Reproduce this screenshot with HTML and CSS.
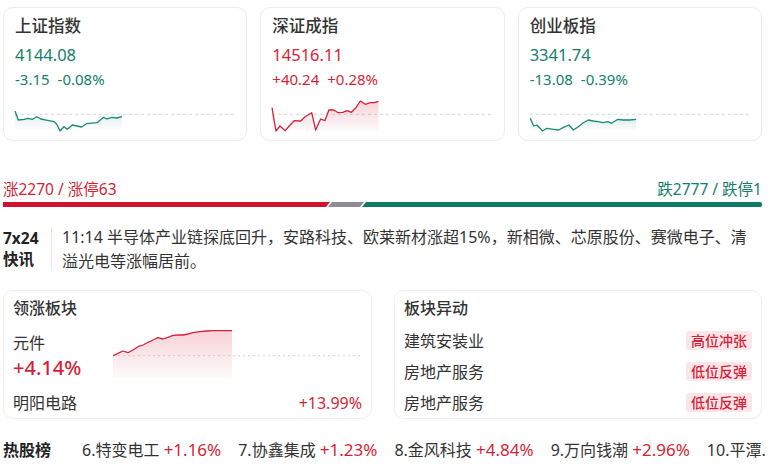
FILE: index.html
```html
<!DOCTYPE html>
<html lang="zh-CN">
<head>
<meta charset="utf-8">
<link rel="stylesheet" href="styles.css">
</head>
<body>
<div class="page">
  <div class="indices">
    <div class="card">
      <div class="title">上证指数</div>
      <div class="value down">4144.08</div>
      <div class="change down"><span>-3.15</span><span>-0.08%</span></div>
      <svg class="spark" viewBox="0 0 223 32" preserveAspectRatio="none">
        <defs>
          <linearGradient id="gG" x1="0" y1="0" x2="0" y2="1">
            <stop offset="0" stop-color="#1a8a72" stop-opacity="0.16"/>
            <stop offset="1" stop-color="#1a8a72" stop-opacity="0"/>
          </linearGradient>
          <linearGradient id="gR" x1="0" y1="0" x2="0" y2="1">
            <stop offset="0" stop-color="#d6213a" stop-opacity="0.2"/>
            <stop offset="1" stop-color="#d6213a" stop-opacity="0.02"/>
          </linearGradient>
        </defs>
        <line class="base" x1="0" y1="14.3" x2="223" y2="14.3"/>
        <polygon fill="url(#gG)" points="0,11 3.3,20 9.3,19.3 12.7,18.3 17.7,19.3 22,16.7 26,19 32.7,20.3 39.3,21.7 42,24 45.3,31 49.3,26.7 52.7,29.3 57.7,25 62.7,26 67,27 72,23.7 82.7,22.7 89.3,17.3 92.7,19 97.7,17.3 102.7,18 107.7,16.7 107.7,30 0,30"/>
        <polyline class="ln green" points="0,11 3.3,20 9.3,19.3 12.7,18.3 17.7,19.3 22,16.7 26,19 32.7,20.3 39.3,21.7 42,24 45.3,31 49.3,26.7 52.7,29.3 57.7,25 62.7,26 67,27 72,23.7 82.7,22.7 89.3,17.3 92.7,19 97.7,17.3 102.7,18 107.7,16.7"/>
      </svg>
    </div>
    <div class="card">
      <div class="title">深证成指</div>
      <div class="value up">14516.11</div>
      <div class="change up"><span>+40.24</span><span>+0.28%</span></div>
      <svg class="spark" viewBox="0 0 223 32" preserveAspectRatio="none">
        <line class="base" x1="0" y1="14.3" x2="223" y2="14.3"/>
        <polygon fill="url(#gR)" points="0,7.7 4,31 8,26 13.3,30.7 17.3,26 22.3,20.7 29,21 33.3,16.7 40,12.7 44,30 49,19 53.3,20.7 57.3,10 62.3,10 66.7,12.7 71.3,12.3 75.7,10.7 80,12.3 84,8.3 89,1 94,4.3 99,2.7 103.3,2.7 107.3,1.3 107.3,30 0,30"/>
        <polyline class="ln red" points="0,7.7 4,31 8,26 13.3,30.7 17.3,26 22.3,20.7 29,21 33.3,16.7 40,12.7 44,30 49,19 53.3,20.7 57.3,10 62.3,10 66.7,12.7 71.3,12.3 75.7,10.7 80,12.3 84,8.3 89,1 94,4.3 99,2.7 103.3,2.7 107.3,1.3"/>
      </svg>
    </div>
    <div class="card">
      <div class="title">创业板指</div>
      <div class="value down">3341.74</div>
      <div class="change down"><span>-13.08</span><span>-0.39%</span></div>
      <svg class="spark" viewBox="0 0 223 32" preserveAspectRatio="none">
        <line class="base" x1="0" y1="14.3" x2="223" y2="14.3"/>
        <polygon fill="url(#gG)" points="0.3,18.3 3.7,26 7,25 12.7,31 17,28.3 23.7,29.3 28.7,30 35.3,26.7 39.3,25 43.7,30 48.7,26.7 53.7,22.7 58.7,20 63.7,21 68.7,21.7 73.7,22.7 78.7,21.7 82,23.3 88.7,19.3 93.7,20 100.3,20 107,19.3 107,31 0.3,31"/>
        <polyline class="ln green" points="0.3,18.3 3.7,26 7,25 12.7,31 17,28.3 23.7,29.3 28.7,30 35.3,26.7 39.3,25 43.7,30 48.7,26.7 53.7,22.7 58.7,20 63.7,21 68.7,21.7 73.7,22.7 78.7,21.7 82,23.3 88.7,19.3 93.7,20 100.3,20 107,19.3"/>
      </svg>
    </div>
  </div>

  <div class="breadth">
    <span class="up">涨2270 / 涨停63</span>
    <span class="down">跌2777 / 跌停1</span>
  </div>
  <div class="ratio">
    <div class="seg seg-up" style="flex-grow:2270"></div>
    <div class="seg seg-flat"></div>
    <div class="seg seg-down" style="flex-grow:2777"></div>
  </div>

  <div class="news">
    <div class="news-label">7x24<br>快讯</div>
    <div class="news-text">11:14 半导体产业链探底回升，安路科技、欧莱新材涨超15%，新相微、芯原股份、赛微电子、清溢光电等涨幅居前。</div>
  </div>

  <div class="panels">
    <div class="panel">
      <div class="panel-title">领涨板块</div>
      <div class="lead">
        <div class="lead-info">
          <div class="lead-name">元件</div>
          <div class="lead-pct up">+4.14%</div>
        </div>
        <svg class="lead-chart" viewBox="0 0 249 52" preserveAspectRatio="none">
          <line class="base dots" x1="0" y1="29.7" x2="249" y2="29.7"/>
          <polygon fill="url(#gR)" points="0,29.7 5,27.3 10,25 15,26.7 20,24 25,20.7 30,19 35,16.3 40,14 45,11.7 50,13 55,11.3 60,9.3 65,9 70,9 75,8 80,6.7 86.7,5.7 93.3,5 100,4.7 106.7,4.7 113.3,4.7 119,4.7 119,52 0,52"/>
          <polyline class="ln red" points="0,29.7 5,27.3 10,25 15,26.7 20,24 25,20.7 30,19 35,16.3 40,14 45,11.7 50,13 55,11.3 60,9.3 65,9 70,9 75,8 80,6.7 86.7,5.7 93.3,5 100,4.7 106.7,4.7 113.3,4.7 119,4.7"/>
        </svg>
      </div>
      <div class="lead-stock">
        <span>明阳电路</span>
        <span class="up">+13.99%</span>
      </div>
    </div>
    <div class="panel">
      <div class="panel-title">板块异动</div>
      <div class="moves">
        <div class="move-row"><span>建筑安装业</span><span class="badge">高位冲张</span></div>
        <div class="move-row"><span>房地产服务</span><span class="badge">低位反弹</span></div>
        <div class="move-row"><span>房地产服务</span><span class="badge">低位反弹</span></div>
      </div>
    </div>
  </div>

  <div class="hot">
    <span class="hot-title">热股榜</span>
    <span class="hot-item">6.特变电工 <span class="hot-pct">+1.16%</span></span>
    <span class="hot-item">7.协鑫集成 <span class="hot-pct">+1.23%</span></span>
    <span class="hot-item">8.金风科技 <span class="hot-pct">+4.84%</span></span>
    <span class="hot-item">9.万向钱潮 <span class="hot-pct">+2.96%</span></span>
    <span class="hot-item last">10.平潭.</span>
  </div>
</div>
</body>
</html>
```

FILE: styles.css
```css
* { box-sizing: border-box; }
html, body { margin: 0; padding: 0; background: #fff; }
body {
  font-family: "Noto Sans", "Noto Sans CJK SC", sans-serif;
  color: #333;
  width: 770px;
  height: 464px;
  overflow: hidden;
}
.page { padding: 7px 8px 0 3px; }

.up { color: #d41f36; }
.down { color: #14806c; }

.indices {
  display: grid;
  grid-template-columns: repeat(3, 1fr);
  gap: 13px;
}
.card {
  border: 1px solid #ececec;
  border-radius: 10px;
  padding: 7px 10px 8px 11px;
  display: flex;
  flex-direction: column;
}
.title { font-size: 16.5px; line-height: 22px; font-weight: 500; color: #333; }
.value { font-size: 16.5px; line-height: 22px; margin-top: 7px; }
.change { font-size: 15px; line-height: 20px; margin-top: 3px; display: flex; gap: 8px; }
.spark { display: block; width: 100%; height: 32px; margin-top: 11px; overflow: visible; }
.base { stroke: #d6d6d6; stroke-width: 1; stroke-dasharray: 3 3; vector-effect: non-scaling-stroke; }
.dots { stroke: #d4d4d4; stroke-dasharray: 2 3; }
.ln { fill: none; stroke-width: 1.3; stroke-linejoin: round; vector-effect: non-scaling-stroke; }
.ln.green { stroke: #1a8a72; }
.ln.red { stroke: #d6213a; }

.breadth {
  margin-top: 37px;
  display: flex;
  justify-content: space-between;
  font-size: 15.5px;
  line-height: 22px;
}
.ratio {
  margin-top: 2px;
  height: 5px;
  display: flex;
}
.seg { height: 5px; flex-basis: 0; }
.seg-up { background: #d0142f; clip-path: polygon(0 0, 100% 0, calc(100% - 4px) 100%, 0 100%); }
.seg-flat { background: #8d8d93; flex: 0 0 36px; margin-left: -2px; clip-path: polygon(4px 0, 100% 0, calc(100% - 4px) 100%, 0 100%); }
.seg-down { background: #0f7b66; margin-left: -2px; clip-path: polygon(4px 0, 100% 0, 100% 100%, 0 100%); border-radius: 0 2px 2px 0; }

.news {
  margin-top: 18px;
  display: flex;
  line-height: 24px;
}
.news-label {
  width: 49px;
  flex: 0 0 49px;
  font-size: 15.5px;
  font-weight: 700;
  color: #222;
  border-right: 1px solid #e6e6e6;
  margin: 3px 0;
  line-height: 21px;
}
.news-text {
  font-size: 16px;
  padding-left: 10px;
  color: #333;
}

.panels {
  margin-top: 17px;
  display: grid;
  grid-template-columns: 1fr 1fr;
  gap: 22px;
}
.panel {
  border: 1px solid #efefef;
  border-radius: 10px;
  padding: 6px 9px 0 9px;
  font-size: 16px;
  line-height: 22px;
}
.panel-title { color: #333; font-weight: 500; }
.lead { display: flex; margin-top: 7px; height: 56px; }
.lead-info { width: 100px; flex: 0 0 100px; padding-top: 6px; }
.lead-pct { font-size: 20px; line-height: 28px; font-weight: 500; }
.lead-chart { display: block; flex: 1; height: 52px; }
.lead-stock { margin-top: 10px; margin-bottom: 4px; display: flex; justify-content: space-between; }
.moves { margin-top: 6px; }
.move-row {
  height: 31px;
  display: flex;
  align-items: center;
  justify-content: space-between;
}
.badge {
  background: #fde6e9;
  color: #d41f36;
  font-size: 14px;
  line-height: 19px;
  padding: 0 5px;
  border-radius: 3px;
  font-weight: 500;
}

.hot {
  margin-top: 19px;
  display: flex;
  white-space: nowrap;
  font-size: 16px;
  line-height: 24px;
  align-items: baseline;
}
.hot-title { font-weight: 700; color: #222; margin-right: 31px; }
.hot-item { margin-right: 17px; color: #333; }
.hot-item.last { margin-right: 0; }
.hot-pct { color: #d41f36; font-size: 17px; }
```
